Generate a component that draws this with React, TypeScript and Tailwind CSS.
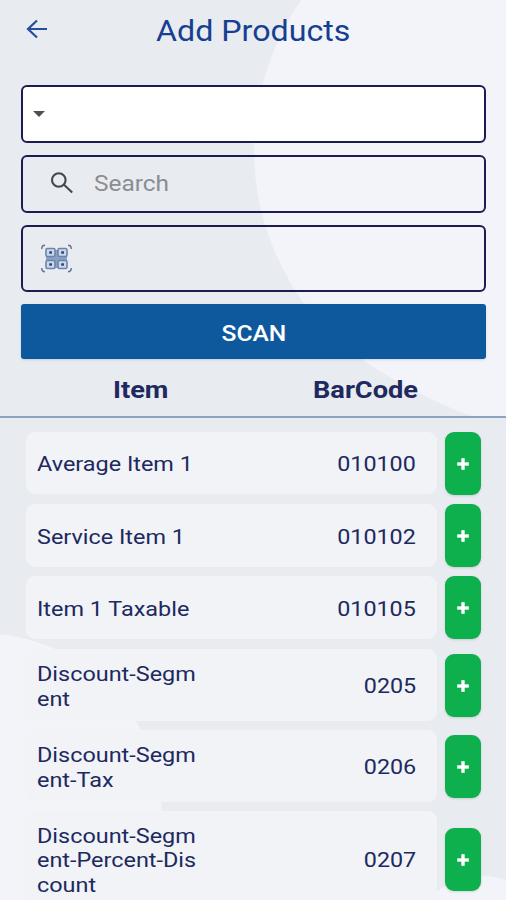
import { Plus } from 'lucide-react';

const products = [
  { name: ['Average Item 1'], code: '010100', row: 'h-[62px] mb-[10px]' },
  { name: ['Service Item 1'], code: '010102', row: 'h-[63px] mb-[9px]' },
  { name: ['Item 1 Taxable'], code: '010105', row: 'h-[63px] mb-[10px]' },
  { name: ['Discount-Segm', 'ent'], code: '0205', row: 'h-[72px] mb-[9px]' },
  { name: ['Discount-Segm', 'ent-Tax'], code: '0206', row: 'h-[72px] mb-[9px]' },
  { name: ['Discount-Segm', 'ent-Percent-Dis', 'count'], code: '0207', row: 'h-[96px]' },
];

function Backdrop() {
  return (
    <svg className="absolute inset-0 -z-10" width="506" height="900" viewBox="0 0 506 900" fill="#f2f4f9">
      <path d="M301 0C270 46 254 98 254 150C254 204 271 258 305 305C322 328 342 346 366 362C400 385 435 403 472 416H506V0Z" />
      <circle cx="-20" cy="815" r="182" />
      <circle cx="482" cy="950" r="74" />
    </svg>
  );
}

function QrIcon() {
  const cells = [[5, 4.5], [17, 4.5], [5, 16.5], [17, 16.5]];
  return (
    <svg width="32" height="30" viewBox="0 0 32 30" fill="none">
      <path d="M.8 5V4Q1 1.3 4 1.3M27 1.3Q30 1.3 30.2 4V5M.8 24V25Q1 27.7 4 27.7M27 27.7Q30 27.7 30.2 25V24" stroke="#67718f" strokeWidth="1.4" />
      <path d="M5 14.5H26M15.5 6V24" stroke="#8ba1c2" strokeWidth="3" />
      {cells.map(([x, y]) => (
        <g key={`${x}-${y}`}>
          <rect x={x} y={y} width="9" height="8" rx="1.5" fill="#cdd7e7" stroke="#6985ad" strokeWidth="1.6" />
          <rect x={x + 3.2} y={y + 2.8} width="2.8" height="2.4" fill="#2c4679" />
        </g>
      ))}
    </svg>
  );
}

export default function App() {
  return (
    <div className="relative isolate h-[900px] w-[506px] overflow-hidden bg-[#e8ebf0] font-[Roboto,sans-serif] text-[#20295e]">
      <Backdrop />

      {/* Header */}
      <header className="flex h-[85px] items-start pl-[26px]">
        <svg className="mt-[18px]" width="22" height="22" viewBox="0 0 22 22" fill="none" stroke="#234f9c" strokeWidth="2.2">
          <path d="M21 11H2M11 2.5L2 11L11 19.5" />
        </svg>
        <h1 className="ml-[108px] mt-[13px] origin-left scale-x-[1.11] text-[29px] leading-9 text-[#163f91]">Add Products</h1>
      </header>

      {/* Filters */}
      <div className="flex flex-col pl-[21px] pr-5">
        <div className="flex h-[58px] items-center rounded-md border-2 border-[#1c1b52] bg-white pl-[10px]">
          <svg width="12" height="6" viewBox="0 0 12 6" fill="#505050">
            <path d="M0 0H12L6 6Z" />
          </svg>
        </div>
        <div className="mt-3 flex h-[58px] items-center rounded-md border-2 border-[#1c1b52] pl-[27px]">
          <svg className="-mt-0.5" width="24" height="22" viewBox="0 0 24 22" fill="none" stroke="#454649" strokeWidth="2.1">
            <circle cx="8.8" cy="8" r="6.8" />
            <path d="M14 12.8L22.2 20.5" />
          </svg>
          <span className="-mt-0.5 ml-5 origin-left scale-x-[1.11] text-[22px] text-[#8b8d92]">Search</span>
        </div>
        <div className="mt-3 flex h-[67px] items-center rounded-md border-2 border-[#1c1b52] pl-[18px] pt-px">
          <QrIcon />
        </div>
        <button className="mt-3 h-[55px] rounded-[3px] bg-[#0e599d] pt-[3px] text-[22px] font-medium text-white shadow-sm">
          <span className="inline-block scale-x-[1.12]">SCAN</span>
        </button>
      </div>

      {/* Column titles */}
      <div className="flex h-[59px] items-center border-b-2 border-[#8da3c0] pt-[6px] text-[24.5px] font-bold">
        <div className="ml-[113px] w-[200px]">
          <span className="inline-block origin-left scale-x-[1.11]">Item</span>
        </div>
        <span className="origin-left scale-x-[1.11]">BarCode</span>
      </div>

      {/* Products */}
      <div className="pl-[26px] pr-[25px] pt-[14px]">
        {products.map((product) => (
          <div key={product.code} className={`flex items-center gap-2 ${product.row}`}>
            <div className="flex h-full w-[411px] items-center justify-between rounded-[9px] bg-[#f1f3f7] pl-[11px] pr-[21px] pt-[3px] text-[21px] leading-[24.5px]">
              <div className="origin-left scale-x-[1.115] whitespace-nowrap">
                {product.name.map((line) => (
                  <div key={line}>{line}</div>
                ))}
              </div>
              <span className="origin-right scale-x-[1.11]">{product.code}</span>
            </div>
            <button className="flex h-[63px] w-9 shrink-0 items-center justify-center rounded-[9px] bg-[#0eb04e] pr-px pt-px text-white shadow-sm">
              <Plus className="h-5 w-5" strokeWidth={4} strokeLinecap="butt" />
            </button>
          </div>
        ))}
      </div>
    </div>
  );
}
